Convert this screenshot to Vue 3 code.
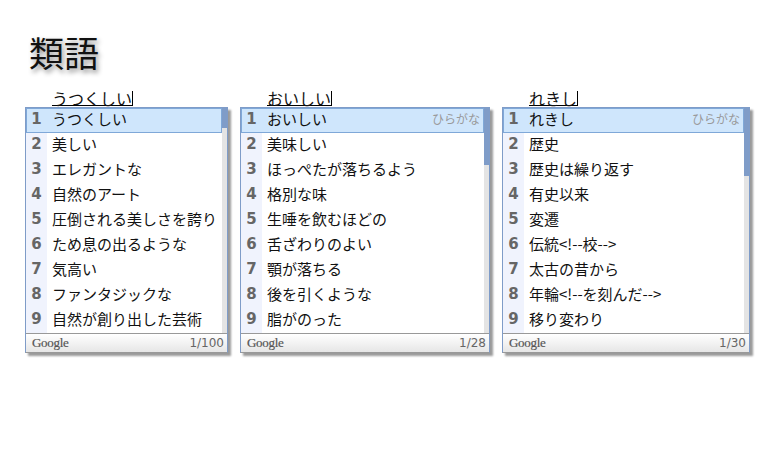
<script setup>
const boxes = [
  { input: 'うつくしい', width: 203, thumb: 20, count: '1/100', hint: '', items: ['うつくしい', '美しい', 'エレガントな', '自然のアート', '圧倒される美しさを誇り', 'ため息の出るような', '気高い', 'ファンタジックな', '自然が創り出した芸術'] },
  { input: 'おいしい', width: 250, thumb: 57, count: '1/28', hint: 'ひらがな', items: ['おいしい', '美味しい', 'ほっぺたが落ちるよう', '格別な味', '生唾を飲むほどの', '舌ざわりのよい', '顎が落ちる', '後を引くような', '脂がのった'] },
  { input: 'れきし', width: 248, thumb: 68, count: '1/30', hint: 'ひらがな', items: ['れきし', '歴史', '歴史は繰り返す', '有史以来', '変遷', '伝統<!--校-->', '太古の昔から', '年輪<!--を刻んだ-->', '移り変わり'] },
]
</script>

<template>
  <main class="page">
    <h1 class="title">類語</h1>
    <div class="columns">
      <section v-for="box in boxes" :key="box.input" class="column" :style="{ width: box.width + 'px' }">
        <div class="input"><span class="composing">{{ box.input }}</span></div>
        <div class="box">
          <div class="body">
            <ol class="list">
              <li v-for="(item, i) in box.items" :key="item" class="row" :class="{ selected: i === 0 }">
                <span class="num">{{ i + 1 }}</span>
                <span class="text">{{ item }}</span>
                <span v-if="i === 0 && box.hint" class="hint">{{ box.hint }}</span>
              </li>
            </ol>
            <div class="scroll"><div class="thumb" :style="{ height: box.thumb + 'px' }"></div></div>
          </div>
          <footer class="foot">
            <span class="google">Google</span>
            <span class="count">{{ box.count }}</span>
          </footer>
        </div>
      </section>
    </div>
  </main>
</template>

<style>
html, body { margin: 0; background: #fff; }
</style>

<style scoped>
.page {
  width: 775px;
  height: 465px;
  box-sizing: border-box;
  padding: 30px 0 0 25px;
  overflow: hidden;
  font-family: "Noto Sans CJK JP", sans-serif;
  color: #111;
}
.title {
  margin: 0 0 0 4px;
  height: 57px;
  font-size: 35px;
  line-height: 44px;
  font-weight: 400;
  color: #111;
  text-shadow: 2px 3px 5px rgba(0, 0, 0, 0.45);
}
.columns { display: flex; gap: 12px; }
.column { flex: none; }
.input {
  display: flex;
  height: 20px;
  padding: 4px 0 0 27px;
  box-sizing: border-box;
  font-size: 16px;
}
.composing {
  display: block;
  box-sizing: border-box;
  height: 15px;
  line-height: 14px;
  border-bottom: 1px solid #000;
  border-right: 1px solid #000;
}
.box {
  box-sizing: border-box;
  height: 246px;
  border: 1px solid #7f9cc8;
  border-bottom-color: #999;
  background: #fff;
  box-shadow: 3px 3px 2px #9a9a9a;
}
.body { display: flex; height: 225px; }
.list { flex: 1; min-width: 0; margin: 0; padding: 0; list-style: none; }
.row {
  display: flex;
  align-items: flex-start;
  box-sizing: border-box;
  height: 25px;
  font-size: 15px;
  line-height: 21px;
}
.num {
  flex: none;
  align-self: stretch;
  width: 21px;
  background: #f0f3fd;
  color: #666;
  font: bold 15px/22px "DejaVu Sans", sans-serif;
  text-align: center;
}
.text { padding-left: 5px; white-space: nowrap; }
.hint { margin-left: auto; padding-right: 4px; font-size: 12px; color: #999; }
.selected { background: #cfe6fc; outline: 1px solid #7fa8d8; outline-offset: -1px; }
.selected .num { background: transparent; }
.scroll { flex: none; width: 5px; background: #e4e4e4; }
.thumb { background: #7f9cc8; }
.foot {
  display: flex;
  align-items: center;
  justify-content: space-between;
  box-sizing: border-box;
  height: 19px;
  padding: 0 3px 0 6px;
  border-top: 1px solid #999;
  background: linear-gradient(#fff, #e6e6e6);
  color: #666;
  font-size: 12px;
}
.google { font: 13px "Liberation Serif", serif; letter-spacing: -0.3px; color: #555; -webkit-text-stroke: 0.2px #555; }
.count { font: 12px "DejaVu Sans", sans-serif; }
</style>
